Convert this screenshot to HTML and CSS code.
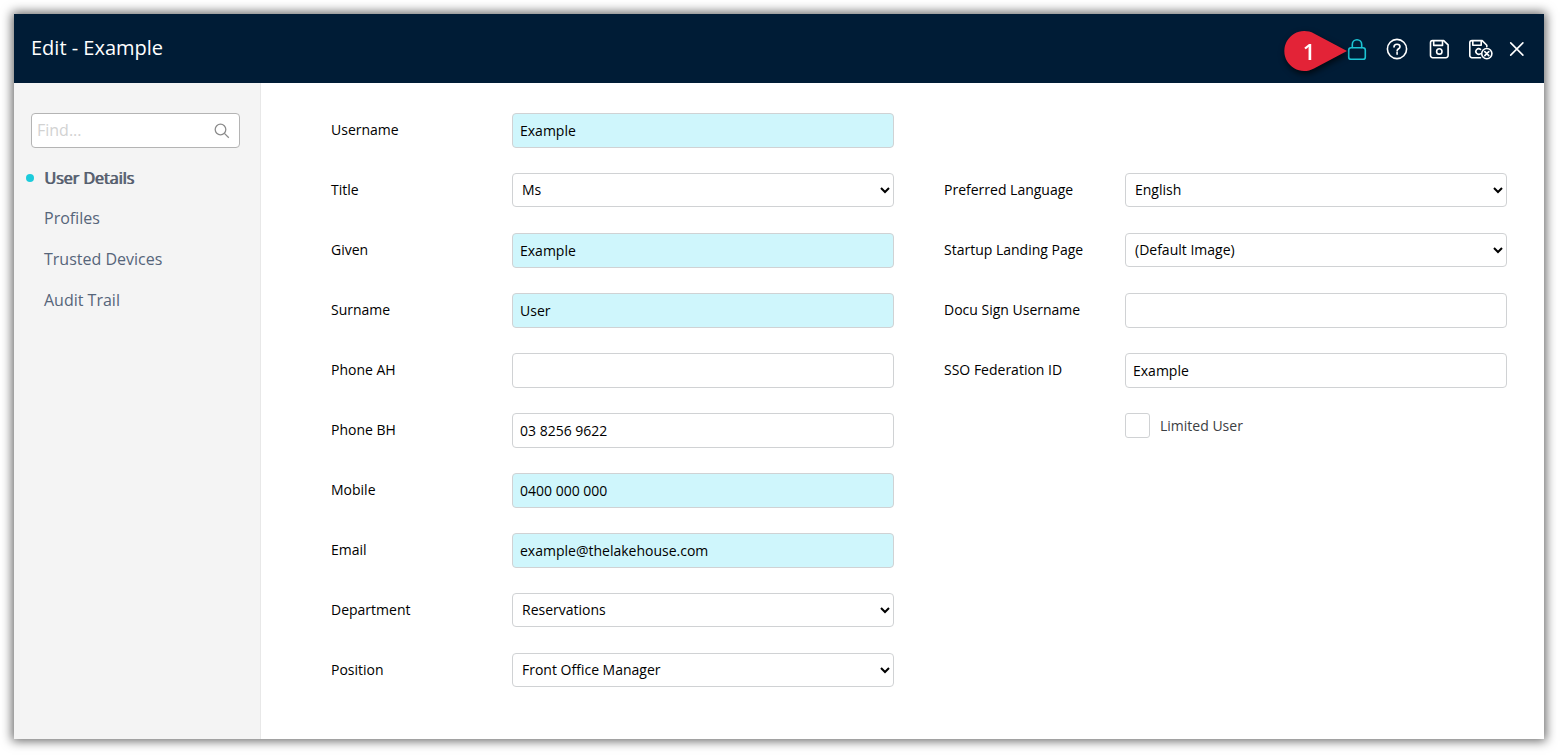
FILE: index.html
```html
<!DOCTYPE html>
<html lang="en">
<head>
    <meta charset="UTF-8">
    <meta name="viewport" content="width=device-width, initial-scale=1.0">
    <title>Edit - Example</title>
    <link rel="stylesheet" href="styles.css">
</head>
<body>

    <div class="window">
        <header class="header">
            <h1>Edit - Example</h1>
            <div class="actions">
                <div class="marker">
                    <svg width="64" height="42" viewBox="0 0 64 42" aria-hidden="true">
                        <path d="M63 21 L30 3.5 A20 20 0 1 0 30 38.5 Z" fill="#e32337"/>
                    </svg>
                    <span>1</span>
                </div>
                <button type="button" class="lock" aria-label="Lock">
                    <svg width="28" height="28" viewBox="0 0 28 28">
                        <rect x="5.7" y="12.7" width="16.6" height="11.6" rx="2.4"/>
                        <path d="M9.3 12.5V9.4a4.7 4.7 0 0 1 9.4 0v3.1"/>
                    </svg>
                </button>
                <button type="button" aria-label="Help">
                    <svg width="28" height="28" viewBox="0 0 28 28">
                        <circle cx="14" cy="14" r="9.6"/>
                        <path d="M11 11.9c0-1.7 1.2-2.7 3-2.7s3 1 3 2.5c0 2.1-2.9 2-2.9 4.2"/>
                        <path d="M14.1 17.6v1.7"/>
                    </svg>
                </button>
                <button type="button" class="save" aria-label="Save">
                    <svg width="28" height="28" viewBox="0 0 28 28">
                        <path d="M7.5 5.6h11.2l4.4 4.3v10.6a2.2 2.2 0 0 1-2.2 2.2H7.7a2.2 2.2 0 0 1-2.2-2.2V7.7a2.1 2.1 0 0 1 2-2.1z"/>
                        <path d="M8.7 5.8v4.6h8.8V5.8"/>
                        <circle cx="14.3" cy="16.4" r="2.7"/>
                    </svg>
                </button>
                <button type="button" aria-label="Save and close">
                    <svg width="28" height="28" viewBox="0 0 28 28">
                        <path d="M13.5 22.7H5a2.2 2.2 0 0 1-2.2-2.2V7.8A2.2 2.2 0 0 1 5 5.6h10.2l4.6 4.6v1.6"/>
                        <path d="M5.8 5.8v4.4h8.4V5.8"/>
                        <path d="M13.5 14.4a2.8 2.8 0 1 0-.2 4.4"/>
                        <circle cx="19.8" cy="18.6" r="5.1"/>
                        <path d="M17.8 16.6l4 4M21.8 16.6l-4 4"/>
                    </svg>
                </button>
                <button type="button" aria-label="Close">
                    <svg width="20" height="28" viewBox="0 0 20 28">
                        <path d="M3.7 7.9l12.2 12.2M15.9 7.9l-12.2 12.2"/>
                    </svg>
                </button>
            </div>
        </header>

        <div class="content">
            <aside class="sidebar">
                <div class="search">
                    <input type="text" placeholder="Find..." aria-label="Find">
                    <svg width="18" height="18" viewBox="0 0 18 18" aria-hidden="true">
                        <circle cx="7.5" cy="8.5" r="5.3"/>
                        <path d="M11.4 12.4l4.4 4.4"/>
                    </svg>
                </div>
                <nav>
                    <a href="#details" class="active">User Details</a>
                    <a href="#profiles">Profiles</a>
                    <a href="#devices">Trusted Devices</a>
                    <a href="#audit">Audit Trail</a>
                </nav>
            </aside>

            <form class="form">
                <div class="column">
                    <div class="row">
                        <label for="username">Username</label>
                        <input type="text" id="username" class="required" value="Example">
                    </div>
                    <div class="row">
                        <label for="title">Title</label>
                        <select id="title"><option>Ms</option></select>
                    </div>
                    <div class="row">
                        <label for="given">Given</label>
                        <input type="text" id="given" class="required" value="Example">
                    </div>
                    <div class="row">
                        <label for="surname">Surname</label>
                        <input type="text" id="surname" class="required" value="User">
                    </div>
                    <div class="row">
                        <label for="phone-ah">Phone AH</label>
                        <input type="text" id="phone-ah">
                    </div>
                    <div class="row">
                        <label for="phone-bh">Phone BH</label>
                        <input type="text" id="phone-bh" value="03 8256 9622">
                    </div>
                    <div class="row">
                        <label for="mobile">Mobile</label>
                        <input type="text" id="mobile" class="required" value="0400 000 000">
                    </div>
                    <div class="row">
                        <label for="email">Email</label>
                        <input type="text" id="email" class="required" value="example@thelakehouse.com">
                    </div>
                    <div class="row">
                        <label for="department">Department</label>
                        <select id="department"><option>Reservations</option></select>
                    </div>
                    <div class="row">
                        <label for="position">Position</label>
                        <select id="position"><option>Front Office Manager</option></select>
                    </div>
                </div>

                <div class="column">
                    <div class="row"></div>
                    <div class="row">
                        <label for="language">Preferred Language</label>
                        <select id="language"><option>English</option></select>
                    </div>
                    <div class="row">
                        <label for="landing">Startup Landing Page</label>
                        <select id="landing"><option>(Default Image)</option></select>
                    </div>
                    <div class="row">
                        <label for="docusign">Docu Sign Username</label>
                        <input type="text" id="docusign">
                    </div>
                    <div class="row">
                        <label for="sso">SSO Federation ID</label>
                        <input type="text" id="sso" value="Example">
                    </div>
                    <div class="row check">
                        <input type="checkbox" id="limited">
                        <label for="limited">Limited User</label>
                    </div>
                </div>
            </form>
        </div>
    </div>

</body>
</html>
```
FILE: styles.css
```css
* {
    box-sizing: border-box;
}
body {
    margin: 0;
    padding: 14px 16px 16px 14px;
    min-height: 100vh;
    display: flex;
    background-color: #fff;
    font-family: 'Open Sans', sans-serif;
    font-size: 14px;
    color: #000;
}
.window {
    flex: 1;
    display: flex;
    flex-direction: column;
    background-color: #fff;
    box-shadow: 0 0 10px 2px rgba(0, 0, 0, 0.6);
}
.header {
    height: 69px;
    padding: 0 17px 2px;
    display: flex;
    justify-content: space-between;
    align-items: center;
    background-color: #001c36;
    color: #fff;
}
.header h1 {
    margin: 0;
    font-size: 20px;
    font-weight: 400;
}
.actions {
    position: relative;
    display: flex;
    gap: 12px;
    padding-top: 2px;
}
.actions button {
    display: flex;
    padding: 0;
    border: none;
    background: none;
    color: #fff;
    cursor: pointer;
}
.actions .lock {
    color: #1cc5d4;
}
.actions .save {
    padding: 0 2px;
}
.actions button svg {
    fill: none;
    stroke: currentColor;
    stroke-width: 1.6;
    stroke-linecap: round;
    stroke-linejoin: round;
}
/* numbered callout pointing at the lock */
.marker {
    position: absolute;
    top: -3px;
    right: 179px;
    width: 64px;
    height: 42px;
    filter: drop-shadow(1px 3px 3px rgba(0, 0, 0, 0.7));
}
.marker span {
    position: absolute;
    top: 0;
    left: 0;
    width: 50px;
    line-height: 42px;
    text-align: center;
    font-size: 22px;
    font-weight: 600;
}
.content {
    flex: 1;
    display: flex;
}
.sidebar {
    width: 247px;
    padding: 30px 20px 20px 17px;
    background-color: #f4f4f4;
    border-right: 1px solid #e8e8e8;
}
.search {
    display: flex;
    align-items: center;
    height: 35px;
    padding: 0 8px 2px 5px;
    background-color: #fff;
    border: 1px solid #b4b4b4;
    border-radius: 4px;
}
.search input {
    flex: 1;
    min-width: 0;
    padding: 0;
    border: none;
    outline: none;
    background: none;
    font-family: inherit;
    font-size: 16px;
}
.search input::placeholder {
    color: #d2d2d2;
}
.search svg {
    fill: none;
    stroke: #8c8c8c;
    stroke-width: 1.3;
}
nav {
    display: flex;
    flex-direction: column;
    padding: 10px 0 0 13px;
}
nav a {
    position: relative;
    line-height: 41px;
    font-size: 16px;
    color: #56657a;
    text-decoration: none;
}
nav .active {
    line-height: 40px;
    color: #555d6e;
    text-shadow: 1px 0 #555d6e;
}
nav .active::before {
    content: '';
    position: absolute;
    top: 16px;
    left: -18px;
    width: 8px;
    height: 8px;
    border-radius: 50%;
    background-color: #1ccbdb;
}
.form {
    flex: 1;
    display: grid;
    grid-template-columns: 1fr 1fr;
    gap: 50px;
    padding: 30px 37px 20px 70px;
}
.row {
    display: flex;
    align-items: flex-start;
    height: 60px;
}
.row label {
    width: 181px;
    line-height: 34px;
}
.row input[type="text"], .row select {
    flex: 1;
    min-width: 0;
    height: 35px;
    padding: 0 7px;
    border: 1px solid #d0d2d4;
    border-radius: 4px;
    background-color: #fff;
    font-family: inherit;
    font-size: 14px;
    color: #000;
}
.row select {
    height: 34px;
    padding: 0 0 2px 5px;
}
.row input.required {
    background-color: #cff6fc;
}
.check {
    padding-left: 181px;
    gap: 10px;
}
.check input {
    appearance: none;
    width: 25px;
    height: 25px;
    margin: 0;
    border: 1px solid #d0d2d4;
    border-radius: 3px;
    background-color: #fff;
}
.check input:checked {
    background-color: #1ccbdb;
}
.check label {
    width: auto;
    line-height: 25px;
    color: #3c4043;
}
```
